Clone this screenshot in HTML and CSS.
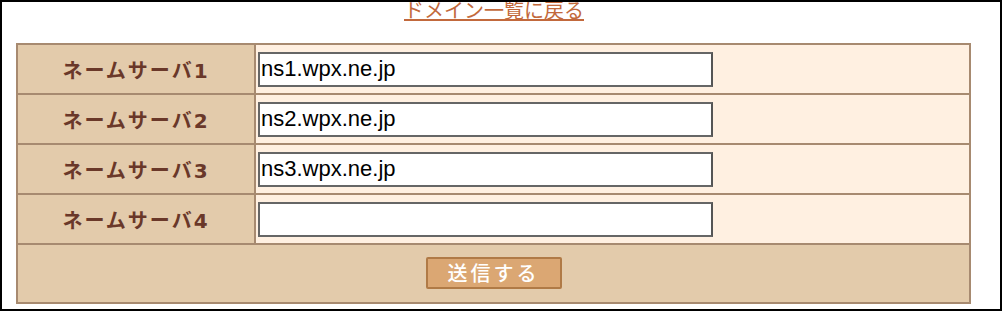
FILE: index.html
```html
<!DOCTYPE html>
<html>
<head>
  <meta charset="utf-8">
  <title>ネームサーバ設定</title>
  <link rel="stylesheet" href="styles.css">
</head>
<body>
  <div class="frame">
    <div class="back">
      <a href="#">ドメイン一覧に戻る</a>
    </div>
    <form class="ns-form" onsubmit="return false;">
      <table class="ns-table">
        <tr>
          <th>ネームサーバ1</th>
          <td><input type="text" value="ns1.wpx.ne.jp"></td>
        </tr>
        <tr>
          <th>ネームサーバ2</th>
          <td><input type="text" value="ns2.wpx.ne.jp"></td>
        </tr>
        <tr>
          <th>ネームサーバ3</th>
          <td><input type="text" value="ns3.wpx.ne.jp"></td>
        </tr>
        <tr>
          <th>ネームサーバ4</th>
          <td><input type="text" value=""></td>
        </tr>
        <tr>
          <td class="submit-row" colspan="2"><button type="submit">送信する</button></td>
        </tr>
      </table>
    </form>
  </div>
</body>
</html>
```

FILE: styles.css
```css
/* 基本設定 */
html, body {
  margin: 0;
  padding: 0;
  background: #fff;
  font-family: "Liberation Sans", "Noto Sans CJK JP", sans-serif;
}

.frame {
  width: 1002px;
  height: 311px;
  box-sizing: border-box;
  border: 2px solid #000;
  overflow: hidden;
}

.back {
  width: 984px;
  text-align: center;
  font-family: "Noto Sans CJK JP", sans-serif;
  font-size: 20px;
  line-height: 24px;
  margin-top: -4px;
}

.back a {
  color: #c2693c;
  text-decoration: underline;
  text-underline-offset: 1px;
}

.ns-form {
  margin: 21px 0 0 14px;
}

/* border=1 cellspacing=0 の表 */
.ns-table {
  width: 955px;
  border-collapse: separate;
  border-spacing: 0;
  border: 1px solid #a78a70;
}

.ns-table th,
.ns-table td {
  border: 1px solid #a78a70;
  height: 48px;
  padding: 0;
}

.ns-table th {
  width: 236px;
  background: #e3cbab;
  color: #6a3829;
  font-family: "DejaVu Sans", "Noto Sans CJK JP", sans-serif;
  font-size: 20px;
  letter-spacing: 2px;
  font-weight: bold;
  text-align: center;
}

.ns-table td {
  background: #fff0e1;
  padding-left: 2px;
}

.ns-table input {
  display: block;
  width: 455px;
  height: 35px;
  box-sizing: border-box;
  border: 2px solid #666;
  border-right-color: #555;
  padding: 0 0 0 1px;
  font-family: "Liberation Sans", sans-serif;
  font-size: 22px;
  color: #000;
  background: #fff;
}

/* 送信ボタン */
.ns-table td.submit-row {
  height: 57px;
  background: #e3cbab;
  text-align: center;
  padding: 0;
}

.submit-row button {
  width: 136px;
  height: 32px;
  margin-bottom: 2px;
  background: #dba773;
  border: 2px solid #b07a46;
  border-radius: 2px;
  color: #fff;
  font-family: "Noto Sans CJK JP", sans-serif;
  font-size: 20px;
  font-weight: 500;
  letter-spacing: 3px;
  line-height: 26px;
  padding: 0;
}
```
